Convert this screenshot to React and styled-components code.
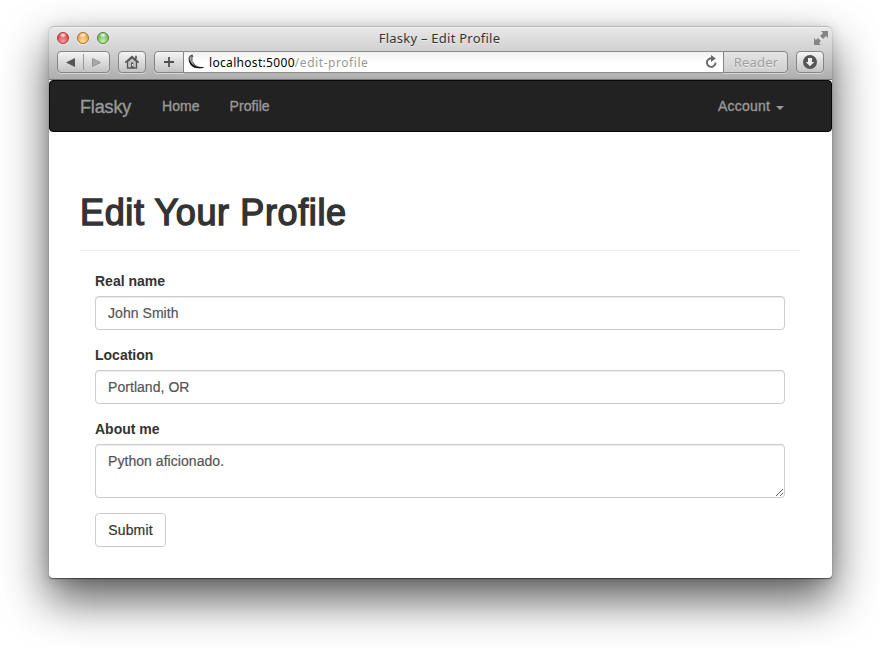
import React from "react";
import styled, { createGlobalStyle } from "styled-components";

const Global = createGlobalStyle`
  * { box-sizing: border-box; }
  html, body { margin: 0; height: 100%; background: #fff; overflow: hidden; }
  body { font-family: "Liberation Sans", Arial, sans-serif; font-size: 14px; line-height: 20px; color: #333; }
  button, input, textarea { font: inherit; }
`;

const Desktop = styled.div`
  width: 881px;
  height: 649px;
  padding: 26px 49px 71px;
  overflow: hidden;
`;

const Window = styled.main`
  width: 783px;
  height: 552px;
  background: #fff;
  border-radius: 5px 5px 4px 4px;
  box-shadow: 0 1px 1px rgba(0, 0, 0, 0.5), 0 2px 12px rgba(0, 0, 0, 0.14),
    0 21px 45px 1px rgba(0, 0, 0, 0.64);
`;

const Chrome = styled.header`
  height: 54px;
  padding: 1px 8px 0;
  border-radius: 5px 5px 0 0;
  background: linear-gradient(#e9e9e9, #d2d2d2 45%, #adadad);
  border-bottom: 1px solid #777;
  box-shadow: inset 0 1px 0 #b9b9b9, inset 0 2px 0 #f2f2f2;
  font-family: "Noto Sans", sans-serif;
`;

const TitleRow = styled.div`
  display: grid;
  grid-template-columns: 60px 1fr 60px;
  align-items: center;
  height: 24px;
  padding-bottom: 2px;
`;

const Lights = styled.div`
  display: flex;
  gap: 8px;
`;

const Light = styled.span`
  width: 12px;
  height: 12px;
  border-radius: 50%;
  border: 1px solid ${(p) => p.$edge};
  background: radial-gradient(ellipse 4px 3px at 50% 20%, #fff, transparent),
    radial-gradient(circle at 50% 85%, ${(p) => p.$glow}, ${(p) => p.$fill} 75%);
  box-shadow: 0 1px 0 rgba(255, 255, 255, 0.5);
`;

const WindowTitle = styled.div`
  padding-right: 2px;
  text-align: center;
  font-size: 13px;
  letter-spacing: 0.24px;
  line-height: 20px;
  white-space: nowrap;
  color: #333;
  text-shadow: 0 1px 0 rgba(255, 255, 255, 0.5);
`;

const Expand = styled.svg`
  justify-self: end;
  margin-right: -5px;
`;

const Toolbar = styled.div`
  display: flex;
  gap: 8px;
  height: 22px;
`;

const ToolButton = styled.button`
  display: flex;
  align-items: center;
  justify-content: center;
  width: ${(p) => p.$width}px;
  height: 22px;
  padding: 0;
  border: 1px solid #858585;
  border-radius: ${(p) => p.$radius || "4px"};
  background: linear-gradient(#f4f4f4, #c4c4c4);
  box-shadow: 0 1px 0 rgba(255, 255, 255, 0.45);
`;

const AddressGroup = styled.div`
  display: flex;
  flex: 1;
`;

const Address = styled.div`
  display: flex;
  flex: 1;
  align-items: center;
  height: 22px;
  padding: 0 5px 0 4px;
  border: solid #8c8c8c;
  border-width: 1px 0;
  background: linear-gradient(#f1f1f1, #fff 50%);
  font-size: 12px;
  line-height: 20px;
  color: #000;
`;

const Url = styled.span`
  flex: 1;
  margin-left: 5px;
  padding-top: 1px;
  letter-spacing: 0.32px;
`;

const Path = styled.span`
  color: #999;
  letter-spacing: 0.55px;
`;

const ReaderButton = styled(ToolButton)`
  padding-left: 1px;
  color: #a0a0a0;
  font-size: 13px;
  letter-spacing: 0.2px;
  line-height: 20px;
  text-shadow: 0 1px 0 #eee;
  background: linear-gradient(#e5e5e5, #cfcfcf);
`;

const Navbar = styled.nav`
  display: flex;
  align-items: center;
  height: 52px;
  padding: 0 47px 0 30px;
  border: 1px solid #080808;
  border-radius: 4px;
  background: #222;
  color: #999;
  -webkit-text-stroke: 0.35px #999;
`;

const Brand = styled.a`
  width: 82px;
  padding-top: 2px;
  font-size: 18px;
  letter-spacing: -0.15px;
`;

const NavItem = styled.a`
  margin-right: 30px;
  letter-spacing: 0.06px;
`;

const Account = styled.a`
  display: flex;
  align-items: center;
  gap: 6px;
  margin-left: auto;
  letter-spacing: 0.2px;
`;

const Caret = styled.span`
  margin-top: 3px;
  border: solid transparent;
  border-width: 4px 4px 0;
  border-top-color: #999;
`;

const Content = styled.section`
  padding: 60px 32px 0 31px;
`;

const Heading = styled.h1`
  margin: 0 0 20px;
  padding-bottom: 16px;
  border-bottom: 1px solid #eee;
  font-size: 36px;
  font-weight: 400;
  line-height: 42px;
  letter-spacing: 0.62px;
  -webkit-text-stroke: 1.4px #333;
`;

const Form = styled.form`
  padding: 0 15px;
`;

const Field = styled.div`
  margin-bottom: 15px;
`;

const Label = styled.label`
  display: block;
  margin-bottom: 5px;
  font-weight: 700;
`;

const Input = styled.input`
  display: block;
  width: 100%;
  height: 34px;
  padding: 6px 12px;
  border: 1px solid #ccc;
  border-radius: 4px;
  background: #fff;
  box-shadow: inset 0 1px 1px rgba(0, 0, 0, 0.075);
  color: #555;
  letter-spacing: 0.05px;
  -webkit-text-stroke: 0.2px #555;
  outline: 0;
`;

const TextArea = styled(Input)`
  height: 54px;
  resize: vertical;
`;

const Submit = styled.button`
  display: block;
  width: 71px;
  height: 34px;
  padding: 0;
  border: 1px solid #ccc;
  border-radius: 4px;
  background: #fff;
  color: #333;
  letter-spacing: 0.15px;
  -webkit-text-stroke: 0.2px #333;
`;

const ExpandIcon = () => (
  <Expand width="16" height="16" viewBox="0 0 16 16" fill="#858585">
    <path d="M8 1h7v7l-2-2-3 3-3-3 3-3zM1 8l2 2 2-2 3 3-2 2 2 2H1z" />
    <path d="m6.500 7 2.500 2.500" stroke="#e3e3e3" strokeWidth="1.400" />
  </Expand>
);

const HistoryIcon = () => (
  <svg width="51" height="20">
    <path d="M8 10.500 17 6v9z" fill="#555" />
    <path d="M25.500 2v16" stroke="#999" />
    <path d="M34.500 6.500v8l8-4z" fill="#aaa" stroke="#888" strokeWidth=".8" />
  </svg>
);

const HomeIcon = () => (
  <svg width="16" height="16" viewBox="0 0 16 16">
    <path d="M3.500 7.500 8 3.500l4.500 4V14h-9z" fill="#c3c3c3" stroke="#555" strokeWidth="1.300" />
    <path d="m1.300 8.700 6.700-6.200 6.700 6.200M12 5V1.800" fill="none" stroke="#555" strokeWidth="1.600" />
    <path d="M7 8.500h2.300V14H7z" fill="#555" />
    <path d="M8 10h1v2H8z" fill="#eee" />
  </svg>
);

const PlusIcon = () => (
  <svg width="12" height="12" stroke="#505050" strokeWidth="1.800">
    <path d="M6 1v10M1 6h10" />
  </svg>
);

const FlaskIcon = () => (
  <svg width="16" height="16" viewBox="0 0 16 16">
    <path d="M4.500.5C1 1 0 4 .8 7c1.200 4 4 6.700 8.200 7.200 2.300.2 4.500 0 6.500-.7-4.500-.3-7.500-1.500-9.300-4C4.500 7 4 5 5.300 2.500z" fill="#555" />
    <path d="M1.500 6.500C2.500 10.500 5.500 13 9.500 13.500c2 .2 4 .1 6 0" stroke="#111" strokeWidth="1.100" fill="none" />
    <path d="M3 2.500C1.700 5 2.700 8 5.500 10.500M4.300 3C3.500 5 4 7 5.500 9" stroke="#e5e5e5" strokeWidth=".7" fill="none" />
  </svg>
);

const ReloadIcon = () => (
  <svg width="13" height="14" viewBox="0 0 13 14">
    <path d="M10.500 7.500A4.300 4.300 0 1 1 7 3.400" fill="none" stroke="#686868" strokeWidth="1.900" />
    <path d="m6 0 4.800 3.600L6 7z" fill="#686868" />
  </svg>
);

const DownloadIcon = () => (
  <svg width="14" height="14" viewBox="0 0 14 14">
    <circle cx="7" cy="7" r="7" fill="#555" />
    <path d="M5 3h4v4h2.300L7 11.300 2.700 7H5z" fill="#eee" />
  </svg>
);

export default function App() {
  return (
    <Desktop>
      <Global />
      <Window>
        <Chrome>
          <TitleRow>
            <Lights>
              <Light $edge="#a33a3e" $fill="#e33c42" $glow="#ff9ba0" />
              <Light $edge="#a9712e" $fill="#eba03d" $glow="#ffe095" />
              <Light $edge="#4f8041" $fill="#6bb252" $glow="#c7f3a3" />
            </Lights>
            <WindowTitle>Flasky – Edit Profile</WindowTitle>
            <ExpandIcon />
          </TitleRow>
          <Toolbar>
            <ToolButton type="button" $width={53} aria-label="History"><HistoryIcon /></ToolButton>
            <ToolButton type="button" $width={28} aria-label="Home page"><HomeIcon /></ToolButton>
            <AddressGroup>
              <ToolButton type="button" $width={30} $radius="4px 0 0 4px" aria-label="Add bookmark"><PlusIcon /></ToolButton>
              <Address>
                <FlaskIcon />
                <Url>localhost:5000<Path>/edit-profile</Path></Url>
                <ReloadIcon />
              </Address>
              <ReaderButton type="button" $width={65} $radius="0 4px 4px 0">Reader</ReaderButton>
            </AddressGroup>
            <ToolButton type="button" $width={28} aria-label="Downloads"><DownloadIcon /></ToolButton>
          </Toolbar>
        </Chrome>
        <Navbar>
          <Brand>Flasky</Brand>
          <NavItem>Home</NavItem>
          <NavItem>Profile</NavItem>
          <Account>Account<Caret /></Account>
        </Navbar>
        <Content>
          <Heading>Edit Your Profile</Heading>
          <Form>
            <Field>
              <Label htmlFor="name">Real name</Label>
              <Input id="name" defaultValue="John Smith" />
            </Field>
            <Field>
              <Label htmlFor="location">Location</Label>
              <Input id="location" defaultValue="Portland, OR" />
            </Field>
            <Field>
              <Label htmlFor="about">About me</Label>
              <TextArea as="textarea" id="about" defaultValue="Python aficionado." />
            </Field>
            <Submit type="button">Submit</Submit>
          </Form>
        </Content>
      </Window>
    </Desktop>
  );
}
